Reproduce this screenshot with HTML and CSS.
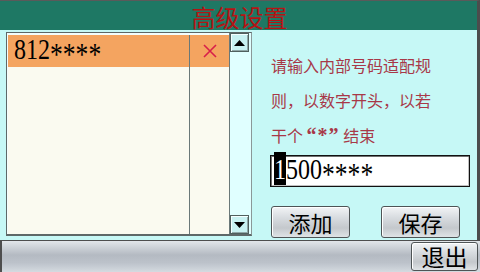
FILE: index.html
```html
<!DOCTYPE html>
<html lang="zh">
<head>
<meta charset="utf-8">
<title>高级设置</title>
<link rel="stylesheet" href="styles.css">
</head>
<body>
<div class="screen">
  <div class="upper">
    <div class="header"><span class="title">高级设置</span></div>
    <div class="main">
      <div class="list">
        <div class="rows">
          <div class="cell num sel"><span class="digits">812<span class="stars">****</span></span></div>
          <div class="cell del sel">
            <svg width="14" height="14" viewBox="0 0 14 14"><path d="M1 1 L13 13 M13 1 L1 13" stroke="#d81f4a" stroke-width="1.6" fill="none"/></svg>
          </div>
          <div class="cell num"></div>
          <div class="cell del"></div>
        </div>
        <div class="scroll">
          <div class="sbtn"><svg width="11" height="6" viewBox="0 0 11 6"><path d="M0 6 L5.5 0 L11 6 Z" fill="#000"/></svg></div>
          <div class="track"></div>
          <div class="sbtn"><svg width="11" height="6" viewBox="0 0 11 6"><path d="M0 0 L11 0 L5.5 6 Z" fill="#000"/></svg></div>
        </div>
      </div>
      <div class="panel">
        <p class="hint">请输入内部号码适配规<br>则，以数字开头，以若<br>干个 <b class="q">“*”</b> 结束</p>
        <div class="input"><span class="digits"><span class="caret">1</span>500<span class="stars">****</span></span></div>
        <div class="btns">
          <button class="btn">添加</button>
          <button class="btn">保存</button>
        </div>
      </div>
    </div>
  </div>
  <div class="footer"><button class="btn exit">退出</button></div>
</div>
</body>
</html>
```
FILE: styles.css
```css
html, body {
  margin: 0;
  padding: 0;
  background: #c6f8f6;
}
.screen {
  width: 480px;
  height: 272px;
  display: flex;
  flex-direction: column;
  overflow: hidden;
  font-family: "Noto Sans CJK SC", "Noto Sans", sans-serif;
}
.upper {
  display: flex;
  flex-direction: column;
  height: 240px;
  border-right: 3px solid #4c4c4c;
  box-sizing: border-box;
  border-top: 1px solid #5a5a5a;
}
.header {
  height: 29px;
  background: #1e7864;
  display: flex;
  justify-content: center;
  align-items: center;
}
.title {
  color: #b41414;
  font-size: 24px;
  line-height: 24px;
  margin: 2px 0 0 2px;
}
.main {
  flex: 1;
  display: flex;
  background: #c6f8f6;
}
.list {
  margin: 2px 0 0 6px;
  width: 246px;
  height: 204px;
  box-sizing: border-box;
  border: 1px solid #5e6868;
  border-right-color: #8a9898;
  border-bottom: 2px solid #5e6868;
  padding: 1px 0 0 1px;
  background: #f2fefe;
  display: flex;
}
.rows {
  flex: 1;
  display: grid;
  grid-template-columns: 181px 40px;
  grid-template-rows: 32px 1fr;
  margin-top: 1px;
  background: #fafaf0;
}
.cell.del {
  border-left: 1px solid #6a7878;
  display: flex;
  align-items: center;
  justify-content: center;
}
.sel {
  background: #f4a460;
}
.num {
  display: flex;
  align-items: center;
  padding-left: 6px;
}
.digits {
  display: inline-block;
  font-family: "Liberation Serif", serif;
  font-size: 30px;
  line-height: 30px;
  color: #000;
  transform: scaleX(0.8);
  transform-origin: left center;
  white-space: nowrap;
}
.stars {
  font-size: 32px;
  vertical-align: -0.18em;
}
.scroll {
  width: 21px;
  border-left: 1px solid #6a7878;
  background: #e0ffff;
  display: flex;
  flex-direction: column;
  margin-top: -1px;
}
.sbtn {
  width: 19px;
  height: 19px;
  box-sizing: border-box;
  border: 1px solid #50605e;
  box-shadow: inset 1px 1px 0 #f4ffff, inset -1px -1px 0 #90a8a8;
  background: #c8f2f2;
  display: flex;
  align-items: center;
  justify-content: center;
}
.track {
  flex: 1;
}
.panel {
  flex: 1;
  padding: 18px 0 0 18px;
  display: flex;
  flex-direction: column;
}
.hint {
  margin: 0;
  color: #a83848;
  font-size: 16px;
  line-height: 35px;
  padding-left: 1px;
}
.q {
  font-family: "Liberation Serif", serif;
  font-weight: bold;
  font-size: 20px;
  letter-spacing: 1px;
}
.input {
  margin-top: 2px;
  width: 200px;
  height: 32px;
  box-sizing: border-box;
  border: 1px solid #111;
  box-shadow: inset 1px 1px 0 #707070, inset -1px -1px 0 #c0c0c0;
  background: #fff;
  display: flex;
  align-items: center;
  padding-left: 3px;
}
.caret {
  background: #000;
  color: #fff;
}
.btns {
  display: flex;
  gap: 31px;
  margin-top: 19px;
  padding-left: 1px;
}
.btn {
  width: 79px;
  height: 32px;
  box-sizing: border-box;
  border: 1px solid #4e5456;
  border-radius: 3px;
  background: linear-gradient(#f2f4f6, #d8dce0 35%, #c4c8cc 70%, #dfe3e6);
  box-shadow: inset 1px 1px 0 #ffffff;
  font-family: "Noto Sans CJK SC", sans-serif;
  font-size: 22px;
  line-height: 28px;
  color: #000;
  padding: 0;
  margin: 0;
}
.footer {
  flex: 1;
  border-top: 1px solid #4e4e4e;
  border-left: 2px solid #4e4e4e;
  background: linear-gradient(#e2e6ea, #b4bac2 45%, #bcc2ca 70%, #d4dae0);
  display: flex;
  justify-content: flex-end;
  align-items: flex-start;
  padding-right: 2px;
}
.exit {
  width: 67px;
  height: 29px;
  margin-top: 1px;
  font-size: 23px;
  line-height: 25px;
  border-radius: 3px;
}
```
